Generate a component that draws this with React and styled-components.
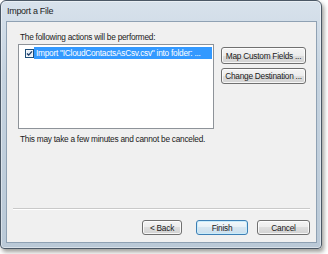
import styled, { createGlobalStyle } from "styled-components";

const GlobalStyle = createGlobalStyle`
  html, body {
    margin: 0;
    padding: 0;
    background: #ffffff;
  }
  * {
    box-sizing: border-box;
  }
`;

const FONT = `"Liberation Sans", Arial, sans-serif`;

const Page = styled.div`
  width: 328px;
  height: 254px;
  font-family: ${FONT};
  font-size: 8.3px;
  letter-spacing: -0.25px;
  color: #1b1b1b;
`;

const Window = styled.div`
  width: 322px;
  height: 249px;
  display: flex;
  flex-direction: column;
  padding: 0 4px 5px 5px;
  border: 1px solid #4b5866;
  border-radius: 6px 6px 4px 4px;
  background: linear-gradient(180deg, #d8e2ec 0%, #c5d3e0 30%, #bac9d7 100%);
  box-shadow: inset 0 0 0 1px rgba(255, 255, 255, 0.45),
    2px 3px 4px rgba(40, 40, 30, 0.45);
`;

const TitleBar = styled.div`
  height: 20px;
  display: flex;
  align-items: center;
  padding-left: 1px;
  font-size: 9px;
  letter-spacing: -0.3px;
  color: #1e1e1e;
`;

const Client = styled.div`
  flex: 1;
  display: flex;
  flex-direction: column;
  background: #f0f0f0;
  border: 1px solid #8fa1b3;
`;

const Body = styled.div`
  flex: 1;
  padding: 9px 0 0 11px;
`;

const Label = styled.div`
  line-height: 12px;
  margin-left: 2px;
  margin-bottom: 1px;
`;

const MainRow = styled.div`
  display: flex;
  align-items: flex-start;
`;

const ListBox = styled.div`
  width: 196px;
  height: 85px;
  background: #ffffff;
  border: 1px solid #8e9399;
  padding: 2px 1px 2px 0;
`;

const ListRow = styled.div`
  display: flex;
  align-items: center;
  height: 12px;
`;

const CheckWrap = styled.div`
  width: 15px;
  height: 12px;
  display: flex;
  align-items: center;
  padding-left: 6px;
`;

const Highlight = styled.div`
  flex: 1;
  height: 12px;
  line-height: 12px;
  padding-left: 2px;
  background: #3399ff;
  color: #ffffff;
  white-space: nowrap;
  overflow: hidden;
`;

const SideButtons = styled.div`
  display: flex;
  flex-direction: column;
  gap: 4px;
  margin-left: 7px;
  margin-top: 3px;
`;

const Button = styled.button`
  font-family: ${FONT};
  font-size: 8.3px;
  letter-spacing: -0.25px;
  color: #1b1b1b;
  width: ${({ $w }) => $w}px;
  height: ${({ $h }) => $h || 16}px;
  padding: 0;
  border-radius: 3px;
  border: 1px solid ${({ $default }) => ($default ? "#3d7fb5" : "#707070")};
  background: ${({ $default }) =>
    $default
      ? "linear-gradient(180deg, #f3f8fb 0%, #e6f0f7 50%, #d6e6f1 50%, #cbdfed 100%)"
      : "linear-gradient(180deg, #f4f4f4 0%, #ececec 50%, #dedede 50%, #d2d2d2 100%)"};
  box-shadow: inset 0 0 0 1px
    ${({ $default }) => ($default ? "#c9ecfb" : "rgba(255, 255, 255, 0.8)")};
  display: flex;
  align-items: center;
  justify-content: center;
  white-space: nowrap;
`;

const Note = styled.div`
  line-height: 12px;
  margin-top: 4px;
  margin-left: 2px;
`;

const Footer = styled.div`
  margin: 0 6px 0 6px;
  border-top: 1px solid #c9c9c9;
  box-shadow: inset 0 1px 0 #ffffff;
  padding: 11px 0 7px 0;
  display: flex;
  justify-content: flex-end;
`;

const FooterGap = styled.div`
  width: ${({ $w }) => $w}px;
`;

const CheckBox = () => (
  <svg width="9" height="9" viewBox="0 0 9 9">
    <rect x="0.5" y="0.5" width="8" height="8" fill="#ffffff" stroke="#1f4f7a" />
    <rect x="1.5" y="1.5" width="6" height="6" fill="#e6eef6" />
    <path d="M2 4.4 L3.7 6.1 L7 2.4" fill="none" stroke="#1f3f6a" strokeWidth="1.4" />
  </svg>
);

export default function App() {
  return (
    <Page>
      <GlobalStyle />
      <Window>
        <TitleBar>Import a File</TitleBar>
        <Client>
          <Body>
            <Label>The following actions will be performed:</Label>
            <MainRow>
              <ListBox>
                <ListRow>
                  <CheckWrap>
                    <CheckBox />
                  </CheckWrap>
                  <Highlight>
                    Import "ICloudContactsAsCsv.csv" into folder: ...
                  </Highlight>
                </ListRow>
              </ListBox>
              <SideButtons>
                <Button $w={85} $h={17}>Map Custom Fields ...</Button>
                <Button $w={85} $h={16}>Change Destination ...</Button>
              </SideButtons>
            </MainRow>
            <Note>This may take a few minutes and cannot be canceled.</Note>
          </Body>
          <Footer>
            <Button $w={40} $h={15}>&lt; Back</Button>
            <FooterGap $w={14} />
            <Button $w={52} $h={15} $default>
              Finish
            </Button>
            <FooterGap $w={9} />
            <Button $w={53} $h={15}>Cancel</Button>
          </Footer>
        </Client>
      </Window>
    </Page>
  );
}
